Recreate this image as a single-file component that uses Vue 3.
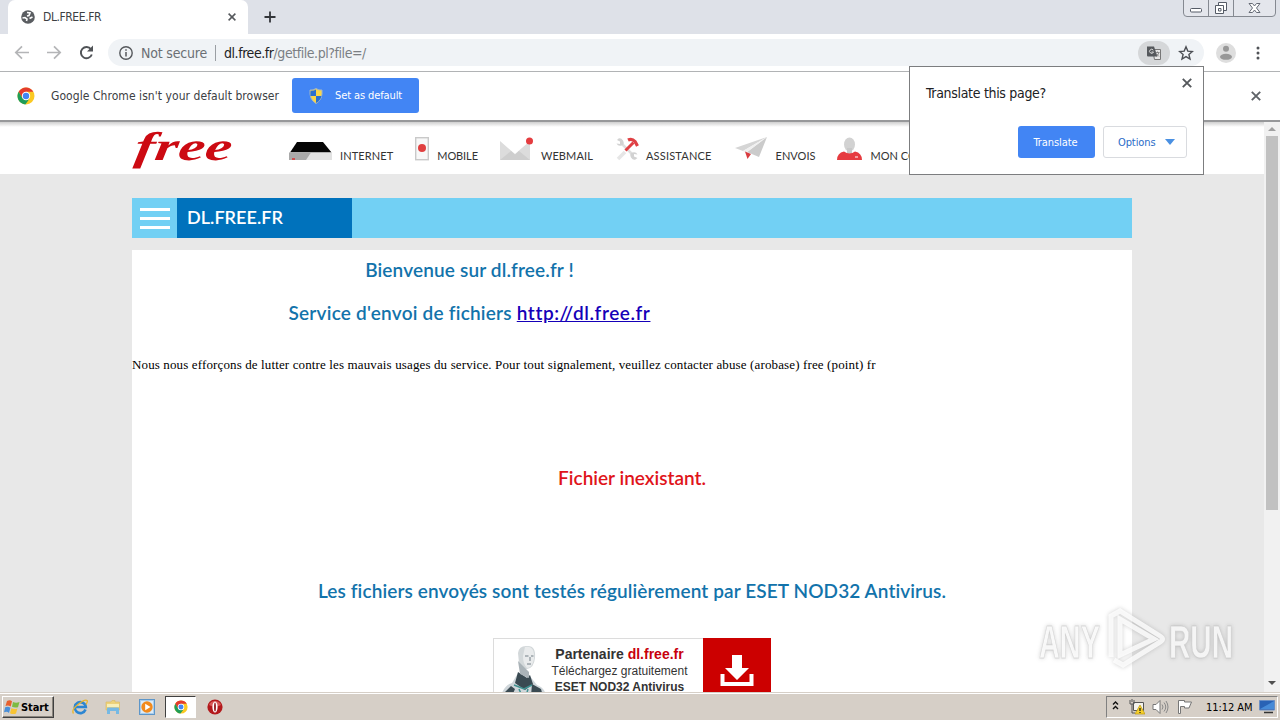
<template>
    <div class="screen">
        <div class="tab-strip">
            <div class="tab">
                <svg class="globe" viewBox="0 0 14 14"><circle cx="7" cy="7" r="6.8" fill="#5a5d61"/><path d="M1.500 8l2.500-.5 2 1.500-.5 2M6 2.500l3 .5-1 2.500-2 .5M8.500 8.500l3-1.500" fill="none" stroke="#fff" stroke-width="1.600"/></svg>
                <span class="tab-title">DL.FREE.FR</span>
                <svg class="x8" viewBox="0 0 8 8"><path d="M.6.6l6.800 6.800M7.400.6L.6 7.400" stroke="#55585c" stroke-width="1.500"/></svg>
            </div>
            <svg class="plus" viewBox="0 0 12 12"><path d="M6 .5v11M.5 6h11" stroke="#33363a" stroke-width="1.800"/></svg>
            <svg class="window-btns" viewBox="0 0 94 18">
                <path d="M.5 0v13q0 3.500 3.500 3.500h85q3.500 0 3.500-3.500V0M25.500 0v16.500M50.500 0v16.500" fill="#e4e6ec" stroke="#858991"/>
                <rect x="7.500" y="8.500" width="11" height="3.500" rx="1" fill="#fff" stroke="#555b66"/>
                <path d="M35.500 2.500h8v8h-8z" fill="#fff" stroke="#555b66"/>
                <path d="M32.500 5.500h8v8h-8zM35.500 8.500h2.500v2.500h-2.500z" fill="#fff" stroke="#555b66"/>
                <path d="M66 3.500h3.500l2 2.500 2-2.500H77l-3.500 4.500 3.500 4.500h-3.500l-2-2.500-2 2.500H66l3.500-4.500z" fill="#fff" stroke="#666b76"/>
            </svg>
        </div>

        <div class="toolbar">
            <svg class="nav-icons" viewBox="0 0 96 18">
                <path d="M29 8.500H16M22 2.300L15.800 8.500l6.200 6.200M47 8.500h13M54 2.300L60.200 8.500 54 14.700" fill="none" stroke="#b4b5b7" stroke-width="1.700"/>
                <path d="M91 5.300A5.600 5.600 0 1 0 91.800 10.500" fill="none" stroke="#505357" stroke-width="1.900"/>
                <path d="M93 1.500v6h-6z" fill="#505357"/>
            </svg>
            <div class="omnibox">
                <svg class="info" viewBox="0 0 14 14"><circle cx="7" cy="7" r="6.200" fill="none" stroke="#55585c" stroke-width="1.400"/><path d="M7 6v4.500M7 3.300v1.500" stroke="#55585c" stroke-width="1.500"/></svg>
                <span class="secure">Not secure</span>
                <span class="sep"></span>
                <span class="url"><b>dl.free.fr</b>/getfile.pl?file=/</span>
                <span class="lang">
                    <svg viewBox="0 0 16 16"><path d="M6.500 4.500h8v10h-6z" fill="#e6e6e6" stroke="#777"/><path d="M1 1.500h7l3.500 10H2q-1 0-1-1z" fill="#55585c"/><path d="M7.300 5.200A2 2 0 1 0 7.500 7H5.500" fill="none" stroke="#ddd"/><path d="M9.500 7.500h4M11.500 6.500v1M13 7.500q-1 3-3 4M10.500 9l2.500 2.500" fill="none" stroke="#777" stroke-width=".8"/></svg>
                </span>
                <svg class="star" viewBox="0 0 16 16"><path d="M8 1.800l1.800 4.300 4.600.4-3.500 3 1.100 4.500L8 11.600 4 14l1.100-4.500-3.500-3 4.600-.4z" fill="none" stroke="#4c4f54" stroke-width="1.400"/></svg>
            </div>
            <svg class="avatar" viewBox="0 0 20 20"><circle cx="10" cy="10" r="10" fill="#dedede"/><circle cx="10" cy="5.800" r="3" fill="#989898"/><ellipse cx="10" cy="13.800" rx="6" ry="3" fill="#989898"/></svg>
            <svg class="dots" viewBox="0 0 4 14"><circle cx="2" cy="2" r="1.500"/><circle cx="2" cy="7" r="1.500"/><circle cx="2" cy="12" r="1.500"/></svg>
        </div>

        <div class="infobar">
            <svg class="chrome" viewBox="0 0 18 18"><use href="#chrome-logo"/></svg>
            <span class="info-text">Google Chrome isn't your default browser</span>
            <div class="default-btn">
                <svg viewBox="0 0 14 16"><path d="M7 .5q3 2 6 1.500 1 9.500-6 13.500Q0 11.500 1 2q3 .5 6-1.500z" fill="#f9d649" stroke="#9fb4c8"/><path d="M7 1.500V8H1.500Q1.200 5 1.600 2.800 5 3 7 1.500zM7 8h5.500Q11.500 12.500 7 15z" fill="#2a6fd0"/></svg>
                <span>Set as default</span>
            </div>
            <svg class="x10" viewBox="0 0 10 10"><path d="M.8.8l8.400 8.400M9.200.8L.8 9.200" stroke="#5f6368" stroke-width="1.900"/></svg>
        </div>

        <div class="viewport">
            <div class="page">
                <div class="site-head">
                    <svg class="logo" viewBox="0 0 104 44"><text x="8" y="32" textLength="97" lengthAdjust="spacingAndGlyphs" transform="skewX(-8)">free</text></svg>
                    <div v-for="item in menu" :key="item.label" class="menu-item" :class="item.icon">
                        <svg v-if="item.icon == 'box'" viewBox="0 0 44 20"><path d="M8 1h26l8.500 10.500H1z" fill="#050505"/><path d="M0 11.500h43V19H0z" fill="#e2e2e2"/><path d="M0 11.500h22L17 19H0z" fill="#a9a9a9"/><path d="M3 18h3" stroke="#d33" stroke-width="1.500"/></svg>
                        <svg v-else-if="item.icon == 'phone'" viewBox="0 0 14 24"><rect x=".7" y=".7" width="12.600" height="22" fill="#f8f8f8" stroke="#c9c9c9" stroke-width="1.400"/><circle cx="7" cy="11" r="4" fill="#e04040"/></svg>
                        <svg v-else-if="item.icon == 'mail'" viewBox="0 0 34 24"><path d="M0 4l15 13L30 4v19H0z" fill="#dcdcdc"/><path d="M0 23l11-9 4 3.500 4-3.500 11 9z" fill="#cecece"/><circle cx="29.500" cy="4" r="3.500" fill="#e43c3f"/></svg>
                        <svg v-else-if="item.icon == 'tools'" viewBox="0 0 24 24"><path d="M6 6l12 12" stroke="#dedede" stroke-width="2.500"/><path d="M2 3l3 1.500V7L1.500 6.500Q3 9.500 6.500 8.500T8 3.500Q6 .5 3.500 1.500" fill="#d2d2d2"/><path d="M22.500 21L19 19.500V17l3.500.5Q21 14.500 17.500 15.500T16 20.500Q18 23.500 20.500 22.500" fill="#d2d2d2"/><path d="M3 22l7-7" stroke="#e6e6e6" stroke-width="3.500"/><path d="M10.500 13.500l8-8" stroke="#df4044" stroke-width="3"/><path d="M13 3q4-2 7 1.500l2.500 4.500" fill="none" stroke="#df4044" stroke-width="3.200"/></svg>
                        <svg v-else-if="item.icon == 'plane'" viewBox="0 0 33 24"><path d="M32 0L0 11l8 3z" fill="#d5d5d5"/><path d="M32 0L12 15l12 5z" fill="#cbcbcb"/><path d="M32 0L8 14l3 2z" fill="#f0f0f0"/><path d="M10 14.500l6 2.500-3.500 5z" fill="#d93c40"/></svg>
                        <svg v-else viewBox="0 0 26 24"><ellipse cx="12.500" cy="7.500" rx="5.500" ry="7" fill="#d2d2d2"/><path d="M10 11h5v6h-5z" fill="#c8c8c8"/><path d="M0 23q0-7 7-8.500 5.500 4 11 0 7 1.500 7 8.500z" fill="#e63b40"/><path d="M18 20h3" stroke="#fff"/></svg>
                        <span>{{ item.label }}</span>
                    </div>
                </div>

                <div class="title-bar">
                    <div class="burger"><i></i><i></i><i></i></div>
                    <div class="title">DL.FREE.FR</div>
                </div>

                <div class="content">
                    <div class="intro">
                        <h2 class="welcome">Bienvenue sur dl.free.fr !</h2>
                        <h2 class="service">Service d'envoi de fichiers <a>http://dl.free.fr</a></h2>
                    </div>
                    <p class="abuse">Nous nous efforçons de lutter contre les mauvais usages du service. Pour tout signalement, veuillez contacter abuse (arobase) free (point) fr</p>
                    <h2 class="missing">Fichier inexistant.</h2>
                    <h2 class="tested">Les fichiers envoyés sont testés régulièrement par ESET NOD32 Antivirus.</h2>
                    <div class="banner">
                        <svg class="robot" viewBox="0 0 48 54">
                            <path d="M0 54q3-11 11-13l6-10 11 2 8 10q8 3 9 11z" fill="#cfd6da"/>
                            <path d="M17 30l9 6 3-3 3 9-8 6-10-7zM3 51l7-7 4 3-3 7H4zM31 42l9 5 2 7H30z" fill="#3a4a52"/>
                            <path d="M13 43l10 4 8-4M18 47l3 7M27 47l-2 7" fill="none" stroke="#3f9190" stroke-width="1.500"/>
                            <path d="M17 11q1-8 10-7 8 0 7 12-1 10-8 11-3 1-8-6z" fill="#d3d8da"/>
                            <path d="M24 5q10-2 9 12-2 9-7 9-4-4-4-12z" fill="#e9ebec"/>
                            <path d="M17 19l2 13 9 4v-6" fill="#aab3b8"/>
                            <path d="M24 14h3.500M30 14h2.500M26 22h4M29 15v4" fill="none" stroke="#727e86"/>
                        </svg>
                        <div class="banner-text">
                            <b>Partenaire <em>dl.free.fr</em></b>
                            <span>Téléchargez gratuitement</span>
                            <strong>ESET NOD32 Antivirus</strong>
                        </div>
                        <div class="download">
                            <svg viewBox="0 0 34 32"><path d="M12 0h10v13h7L17 25 5 13h7z" fill="#fff"/><path d="M2.500 19v10h29V19" fill="none" stroke="#fff" stroke-width="4"/></svg>
                        </div>
                    </div>
                </div>
            </div>
            <div class="scrollbar">
                <i class="up"></i>
                <div class="thumb"></div>
                <i class="down"></i>
            </div>
        </div>

        <div class="taskbar">
            <div class="start">
                <svg viewBox="0 0 16 16"><path d="M3 2q3-1.500 5 .3L6.700 7.500Q4 6 1.500 7z" fill="#e8602c"/><path d="M9 3q3 1.500 6.500 0L14 8.200q-3 1-6-.4z" fill="#7dbb42"/><path d="M1.200 8.200q3-1 5.200.5L5 14Q3 12 0 13.300z" fill="#4a8fd8"/><path d="M7.400 9.200q3 1.300 6 .2L12 14.600q-3 1.200-6-.4z" fill="#f8c433"/></svg>
                <span>Start</span>
            </div>
            <svg class="task-icon ie" viewBox="0 0 16 16"><path d="M13.500 10.500A5.500 5.500 0 1 1 13.800 8H4" fill="none" stroke="#2c86d2" stroke-width="2.600"/><path d="M1.500 14.500Q-1 11 6 5.500T15 1.500q1 1-1 4" fill="none" stroke="#e9b52b" stroke-width="1.300"/></svg>
            <svg class="task-icon folder" viewBox="0 0 16 16"><path d="M1 3h5l1-1.500h3V3h4.500v8H1z" fill="#edd27a" stroke="#d9bb62" stroke-width=".6"/><path d="M2 5h12v3H2z" fill="#f8efb7"/><path d="M2 15V9.500q0-1 1-1h10q1 0 1 1V15h-3v-3H5v3z" fill="#76b9e4"/></svg>
            <svg class="task-icon media" viewBox="0 0 16 16"><rect x=".5" y=".5" width="15" height="15" fill="#a9cdec" stroke="#5d96c9"/><path d="M2 2h12v12H2z" fill="#dcebf7"/><circle cx="8" cy="8" r="5.700" fill="#f28a1c"/><path d="M6.200 4.800v6.400L11.500 8z" fill="#fff"/></svg>
            <div class="task-active">
                <svg viewBox="0 0 18 18">
                    <g id="chrome-logo"><circle cx="9" cy="9" r="8.500" fill="#fbc922"/><path d="M1.640 4.750A8.500 8.500 0 0 1 16.360 4.750H9L5.300 11.200z" fill="#e33b2e"/><path d="M1.640 4.750L5.500 11.200 9 13l3-.5-3.700 5A8.500 8.500 0 0 1 1.640 4.750z" fill="#1f9d58"/><circle cx="9" cy="9" r="4.200" fill="#fff"/><circle cx="9" cy="9" r="3.200" fill="#4285f4"/></g>
                </svg>
            </div>
            <svg class="task-icon opera" viewBox="0 0 16 16"><circle cx="8" cy="8" r="7.600" fill="#b3191c"/><path d="M2 6a6.500 6.500 0 0 1 12 0q-6 3-12 0z" fill="#d85a58"/><ellipse cx="8" cy="8" rx="2.600" ry="5.600" fill="#fff"/><ellipse cx="8" cy="8" rx=".9" ry="4.600" fill="#8e1215"/></svg>
            <div class="tray">
                <svg class="chev" viewBox="0 0 7 9"><path d="M1 3.500L3.500 1 6 3.500M1 8l2.500-2.500L6 8" fill="none" stroke="#111" stroke-width="1.400"/></svg>
                <svg class="net" viewBox="0 0 16 16"><path d="M4.500 3.500h10v8h-10z" fill="#f4f2ec" stroke="#555"/><path d="M1 1v4h4V1M3 0v3M3 5v9h3" fill="none" stroke="#555"/><path d="M11 6l5 9H6z" fill="#f7d02a" stroke="#b99712" stroke-width=".7"/><path d="M11 9v3M11 13v1" stroke="#222" stroke-width="1.300"/></svg>
                <svg class="sound" viewBox="0 0 17 16"><path d="M1 5.500h3L8 1.500v13l-4-4H1z" fill="#fff" stroke="#777"/><path d="M10 5.500q2 2.500 0 5M12 3.500q3.500 4.500 0 9M14 2q4 6 0 12" fill="none" stroke="#888"/></svg>
                <svg class="flag" viewBox="0 0 16 16"><path d="M1.500 14.500v-13h6v1.500h7l-2.500 6H7.500V7.500h-4v7z" fill="#fff" stroke="#777"/></svg>
                <span class="clock">11:12 AM</span>
                <svg class="desk" viewBox="0 0 16 14"><path d="M.5.5h15v9.500H.5z" fill="#2962b5" stroke="#6b8fc4"/><path d="M1 9L15 1v8z" fill="#478bd8"/><path d="M5 12.500h9" stroke="#333" stroke-width="1.500"/></svg>
            </div>
        </div>

        <div class="translate">
            <span class="question">Translate this page?</span>
            <svg class="close" viewBox="0 0 10 10"><path d="M.8.8l8.400 8.400M9.200.8L.8 9.200" stroke="#55585c" stroke-width="1.900"/></svg>
            <div class="actions">
                <div class="go">Translate</div>
                <div class="options"><span>Options</span><i></i></div>
            </div>
        </div>

        <svg class="watermark" viewBox="0 0 200 64">
            <g class="mark">
                <text x="4" y="51" textLength="61" lengthAdjust="spacingAndGlyphs">ANY</text>
                <path d="M76 50V9l9-5 40 25q5 3 0 6L88 58l-9-5M85 16v32l34-16-34-20z"/>
                <text x="134" y="51" textLength="64" lengthAdjust="spacingAndGlyphs">RUN</text>
            </g>
        </svg>
    </div>
</template>
<script setup>
const menu = [
    { label: "INTERNET", icon: "box" },
    { label: "MOBILE", icon: "phone" },
    { label: "WEBMAIL", icon: "mail" },
    { label: "ASSISTANCE", icon: "tools" },
    { label: "ENVOIS", icon: "plane" },
    { label: "MON COMPTE", icon: "user" },
]
</script>
<style>
body{
    overflow: hidden;
}
</style>
<style scoped>
.screen{
    position: relative;
    width: 1280px;
    height: 720px;
    overflow: hidden;
    display: flex;
    flex-direction: column;
    background: #fff;
    font-family: "DejaVu Sans Condensed", "DejaVu Sans", sans-serif;
    font-stretch: condensed;
}
svg{
    display: block;
    flex: none;
}
.screen span, h2, b, strong{
    white-space: nowrap;
}
.tab-strip{
    height: 34px;
    flex: none;
    display: flex;
    background: #dee1e8;
    padding-left: 8px;
}
.tab{
    width: 240px;
    height: 34px;
    box-sizing: border-box;
    display: flex;
    align-items: center;
    background: #fff;
    border-radius: 7px 7px 0 0;
    padding: 0 12px 0 13px;
}
.globe{
    width: 14px;
    height: 14px;
}
.tab-title{
    margin-left: 8px;
    font-size: 12px;
    letter-spacing: -0.42px;
    color: #3c4043;
    flex: 1;
}
.x8{
    width: 8px;
    height: 8px;
}
.plus{
    width: 12px;
    height: 12px;
    margin: 11px 0 0 16px;
}
.window-btns{
    width: 94px;
    height: 18px;
    margin-left: auto;
    margin-right: 3px;
}
.toolbar{
    height: 38px;
    box-sizing: border-box;
    flex: none;
    display: flex;
    align-items: center;
    border-bottom: 1px solid #b1b3b5;
    background: #fff;
}
.nav-icons{
    width: 96px;
    height: 18px;
}
.omnibox{
    width: 1096px;
    height: 27px;
    box-sizing: border-box;
    margin-left: 12px;
    padding-left: 11px;
    border-radius: 14px;
    background: #f0f3f6;
    display: flex;
    align-items: center;
    font-size: 14px;
    color: #7b7f84;
}
.info{
    width: 14px;
    height: 14px;
}
.secure{
    margin-left: 8px;
    width: 67px;
    letter-spacing: -0.19px;
    color: #6b6f74;
}
.sep{
    width: 1px;
    height: 16px;
    margin: 0 8px 0 7px;
    background: #9a9ea3;
}
.url{
    letter-spacing: -0.44px;
}
.url b{
    font-weight: normal;
    color: #202124;
}
.lang{
    width: 32px;
    height: 24px;
    margin-left: auto;
    border-radius: 12px;
    background: #d5d7d9;
    display: flex;
    align-items: center;
    justify-content: center;
}
.lang svg, .star{
    width: 16px;
    height: 16px;
}
.star{
    margin: 0 10px 0 8px;
}
.avatar{
    width: 20px;
    height: 20px;
    margin-left: 12px;
}
.dots{
    width: 4px;
    height: 14px;
    margin-left: 20px;
    fill: #505357;
}
.infobar{
    height: 50px;
    box-sizing: border-box;
    flex: none;
    display: flex;
    align-items: center;
    padding: 0 19px 0 17px;
    border-bottom: 2px solid #97989a;
    background: #fff;
}
.chrome{
    width: 18px;
    height: 18px;
}
.info-text{
    margin-left: 16px;
    width: 229px;
    font-size: 12px;
    letter-spacing: 0.06px;
    color: #3c4043;
}
.default-btn{
    width: 127px;
    height: 35px;
    margin: -1px 0 0 12px;
    border-radius: 3px;
    background: #4285f4;
    display: flex;
    align-items: center;
    color: #fff;
    font-size: 11px;
    letter-spacing: -0.11px;
}
.default-btn svg{
    width: 14px;
    height: 16px;
    margin: 0 12px 0 17px;
}
.x10{
    width: 10px;
    height: 10px;
    margin-left: auto;
}
.viewport{
    height: 570px;
    flex: none;
    display: flex;
    overflow: hidden;
}
.page{
    width: 1264px;
    background: #e8e8e8;
    overflow: hidden;
}
.site-head{
    height: 52px;
    box-sizing: border-box;
    padding-left: 130px;
    display: flex;
    align-items: flex-start;
    background: linear-gradient(#cfcfcf, #fff 5px);
    font-family: Lato, sans-serif;
    font-size: 11px;
    color: #333;
}
.logo{
    width: 104px;
    height: 44px;
    margin-top: 6px;
    overflow: visible;
}
.logo text{
    font: italic bold 40px "Liberation Serif", serif;
    fill: #cc0a12;
}
.menu-item{
    display: flex;
    align-items: flex-end;
    height: 39px;
}
.menu-item span{
    line-height: 13px;
    margin-bottom: -1px;
}
.box{ margin-left: 55px; letter-spacing: 0.1px; }
.box svg{ width: 44px; height: 20px; margin-right: 7px; }
.phone{ margin-left: 22px; letter-spacing: -0.1px; }
.phone svg{ width: 14px; height: 24px; margin-right: 8px; }
.mail{ margin-left: 22px; letter-spacing: 0.11px; }
.mail svg{ width: 34px; height: 24px; margin-right: 7px; }
.tools{ margin-left: 22px; letter-spacing: 0.2px; }
.tools svg{ width: 24px; height: 24px; margin-right: 7px; }
.plane{ margin-left: 23px; }
.plane svg{ width: 33px; height: 24px; margin-right: 8px; }
.user{ margin-left: 22px; }
.user svg{ width: 26px; height: 24px; margin-right: 7px; }
.title-bar{
    width: 1000px;
    height: 40px;
    margin: 24px 0 0 132px;
    display: flex;
    background: #72d0f4;
}
.burger{
    width: 45px;
    box-sizing: border-box;
    padding: 10px 7px 9px 8px;
    display: flex;
    flex-direction: column;
    justify-content: space-between;
}
.burger i{
    height: 3px;
    background: #fff;
}
.title{
    width: 175px;
    box-sizing: border-box;
    padding-left: 10px;
    background: #0072bc;
    color: #fff;
    font: 600 18px/39px Lato, sans-serif;
    letter-spacing: 0.05px;
}
.content{
    width: 1000px;
    height: 442px;
    margin: 12px 0 0 132px;
    display: flex;
    flex-direction: column;
    background: #fff;
    overflow: hidden;
}
h2{
    margin: 0;
    text-align: center;
    font: 600 19px/22px Lato, sans-serif;
    color: #1273ab;
}
.intro{
    width: 675px;
    padding-top: 9px;
}
.welcome{
    letter-spacing: 0.15px;
}
.service{
    margin-top: 21px;
    letter-spacing: 0.22px;
}
.service a{
    color: #1500b8;
    text-decoration: underline;
    letter-spacing: 0.58px;
}
.abuse{
    margin: 33px 0 0;
    font: 13px/16px "Liberation Serif", serif;
    letter-spacing: 0.13px;
    color: #000;
    white-space: nowrap;
}
.missing{
    margin-top: 94px;
    color: #e0141a;
}
.tested{
    margin-top: 91px;
    letter-spacing: 0.11px;
}
.banner{
    width: 278px;
    height: 70px;
    box-sizing: border-box;
    margin: 36px auto 0;
    flex: none;
    display: flex;
    border: 1px solid #dcdcdc;
    border-right: 0;
}
.robot{
    width: 48px;
    height: 54px;
    margin: 3px 0 0 7px;
}
.banner-text{
    width: 154px;
    display: flex;
    flex-direction: column;
    align-items: center;
    font-family: "Liberation Sans", sans-serif;
    font-size: 12px;
    line-height: 16px;
    color: #333;
    padding: 7px 13px 0 0;
    box-sizing: border-box;
}
.banner-text b{
    font-size: 14px;
    line-height: 17px;
}
.banner-text em{
    font-style: normal;
    color: #c8000c;
}
.download{
    width: 68px;
    height: 70px;
    margin: -1px 0 0;
    background: #cc0000;
}
.download svg{
    width: 34px;
    height: 32px;
    margin: 17px 0 0 17px;
}
.scrollbar{
    width: 16px;
    display: flex;
    flex-direction: column;
    align-items: center;
    background: #f1f1f1;
}
.up, .down{
    border: 4px solid transparent;
    border-top-width: 0;
    border-bottom: 4px solid #a0a0a0;
    margin: 5px 0 5px;
}
.thumb{
    width: 12px;
    height: 374px;
    background: #c1c1c1;
}
.down{
    margin: auto 0 7px;
    border-bottom: 0;
    border-top: 4px solid #505050;
}
.taskbar{
    height: 28px;
    box-sizing: border-box;
    flex: none;
    display: flex;
    align-items: center;
    padding: 1px 2px 0;
    background: #d6cfc7;
    border-top: 1px solid #d6cfc7;
    box-shadow: inset 0 1px #fff;
}
.start{
    width: 52px;
    height: 22px;
    box-sizing: border-box;
    padding-left: 1px;
    display: flex;
    align-items: center;
    border: 1px solid;
    border-color: #fff #404040 #404040 #fff;
    box-shadow: inset -1px -1px #8a857d;
    color: #000;
    font-size: 11px;
    font-weight: bold;
    letter-spacing: -0.1px;
}
.start svg{
    width: 16px;
    height: 16px;
    margin-right: 1px;
}
.task-icon{
    width: 16px;
    height: 16px;
}
.ie{ margin-left: 18px; }
.folder{ margin-left: 17px; }
.media{ margin-left: 18px; }
.task-active{
    width: 31px;
    height: 22px;
    box-sizing: border-box;
    margin-left: 10px;
    display: flex;
    align-items: center;
    justify-content: center;
    background: #fff;
    border: 1px solid;
    border-color: #404040 #fff #fff #404040;
}
.task-active svg{
    width: 14px;
    height: 14px;
}
.opera{ margin-left: 11px; }
.tray{
    width: 172px;
    height: 22px;
    box-sizing: border-box;
    margin-left: auto;
    display: flex;
    align-items: center;
    border: 1px solid;
    border-color: #808080 #fff #fff #808080;
}
.chev{ width: 7px; height: 9px; margin: -3px 0 0 5px; }
.net{ width: 16px; height: 16px; margin-left: 10px; }
.sound{ width: 17px; height: 16px; margin-left: 7px; }
.flag{ width: 16px; height: 16px; margin-left: 8px; }
.clock{
    width: 47px;
    margin-left: 13px;
    font-size: 11px;
    letter-spacing: -0.06px;
    color: #000;
}
.desk{ width: 16px; height: 14px; margin-left: 6px; }
.translate{
    position: absolute;
    left: 909px;
    top: 66px;
    width: 295px;
    height: 109px;
    box-sizing: border-box;
    border: 1px solid #7c7d7f;
    background: #fff;
    padding: 17px 16px 0;
}
.question{
    font-size: 14px;
    line-height: 18px;
    letter-spacing: -0.31px;
    color: #202124;
    display: block;
}
.close{
    position: absolute;
    left: 272px;
    top: 11px;
    width: 10px;
    height: 10px;
}
.actions{
    display: flex;
    justify-content: flex-end;
    gap: 8px;
    margin-top: 24px;
    font-size: 11px;
}
.go{
    width: 77px;
    height: 32px;
    box-sizing: border-box;
    padding-right: 2px;
    border-radius: 3px;
    background: #4285f4;
    color: #fff;
    text-align: center;
    line-height: 33px;
    letter-spacing: -0.09px;
}
.options{
    width: 84px;
    height: 32px;
    box-sizing: border-box;
    border: 1px solid #d9dbdf;
    border-radius: 3px;
    color: #2a6cc8;
    display: flex;
    align-items: center;
    padding-left: 14px;
    letter-spacing: -0.1px;
}
.options span{
    width: 37px;
}
.options i{
    margin-left: 10px;
    border: 5px solid transparent;
    border-top: 6px solid #4a90e2;
    border-bottom: 0;
}
.watermark{
    position: absolute;
    left: 1035px;
    top: 607px;
    width: 200px;
    height: 64px;
    overflow: visible;
}
.mark{
    fill: rgba(255, 255, 255, 0.8);
    stroke: rgba(190, 190, 190, 0.5);
    stroke-width: 0.8px;
    filter: drop-shadow(0 0 2px rgba(90, 90, 90, 0.35));
}
.mark path{
    fill: none;
    stroke: rgba(255, 255, 255, 0.8);
    stroke-width: 5px;
}
.mark text{
    font: bold 47px "Liberation Sans Narrow", "Liberation Sans", sans-serif;
}
</style>
